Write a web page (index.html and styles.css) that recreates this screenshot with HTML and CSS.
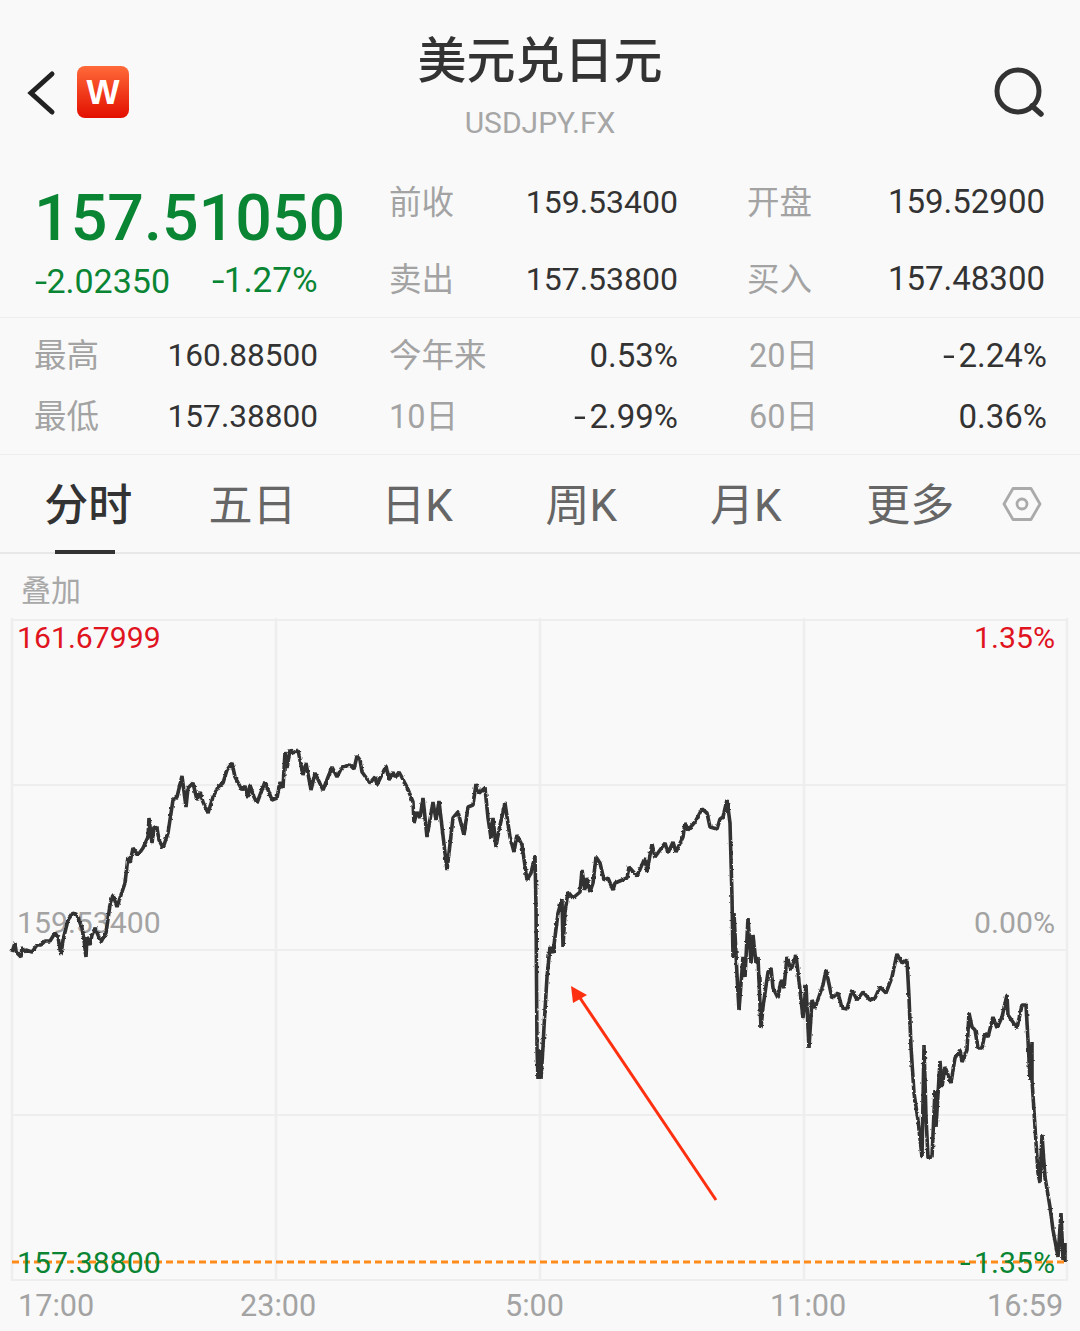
FILE: index.html
```html
<!DOCTYPE html>
<html lang="zh-CN">
<head>
    <meta charset="UTF-8">
    <meta name="viewport" content="width=device-width, initial-scale=1.0">
    <title>美元兑日元</title>
    <link rel="stylesheet" href="styles.css">
</head>
<body>
    <header class="top-bar">
        <div class="top-left">
            <svg class="back-icon" width="30" height="46" viewBox="0 0 30 46">
                <path d="M26 4 L5 23 L26 42" fill="none" stroke="#222" stroke-width="5" stroke-linecap="round" stroke-linejoin="miter"/>
            </svg>
            <div class="logo">W</div>
        </div>
        <div class="title-block">
            <h1>美元兑日元</h1>
            <div class="symbol">USDJPY.FX</div>
        </div>
        <div class="top-right">
            <svg width="52" height="52" viewBox="0 0 52 52">
                <circle cx="24" cy="24" r="21" fill="none" stroke="#333" stroke-width="5"/>
                <path d="M38 39 L47 47" fill="none" stroke="#333" stroke-width="5.5" stroke-linecap="round"/>
            </svg>
        </div>
    </header>

    <section class="quote">
        <div class="price-block">
            <div class="price">157.51050</div>
            <div class="change">
                <span><span class="minus">-</span>2.02350</span>
                <span class="change-pct"><span class="minus">-</span>1.27%</span>
            </div>
        </div>
        <div class="quote-grid">
            <div class="pair"><span class="label">前收</span><span class="value">159.53400</span></div>
            <div class="pair"><span class="label">开盘</span><span class="value">159.52900</span></div>
            <div class="pair"><span class="label">卖出</span><span class="value">157.53800</span></div>
            <div class="pair"><span class="label">买入</span><span class="value">157.48300</span></div>
        </div>
    </section>

    <section class="stats">
        <div class="pair"><span class="label">最高</span><span class="value">160.88500</span></div>
        <div class="pair"><span class="label">今年来</span><span class="value pct">0.53%</span></div>
        <div class="pair"><span class="label">20日</span><span class="value pct"><span class="minus">-</span>2.24%</span></div>
        <div class="pair"><span class="label">最低</span><span class="value">157.38800</span></div>
        <div class="pair"><span class="label">10日</span><span class="value pct"><span class="minus">-</span>2.99%</span></div>
        <div class="pair"><span class="label">60日</span><span class="value pct">0.36%</span></div>
    </section>

    <nav class="tabs">
        <div class="tab active">分时</div>
        <div class="tab">五日</div>
        <div class="tab">日K</div>
        <div class="tab">周K</div>
        <div class="tab">月K</div>
        <div class="tab">更多</div>
        <svg class="tab-settings" width="40" height="36" viewBox="0 0 40 36">
            <path d="M11 2.5 H29 L38 18 L29 33.5 H11 L2 18 Z" fill="none" stroke="#aaa" stroke-width="2.8" stroke-linejoin="round"/>
            <circle cx="20" cy="18" r="5" fill="none" stroke="#aaa" stroke-width="2.8"/>
        </svg>
    </nav>

    <div class="overlay-row">叠加</div>

    <div class="chart">
        <span class="chart-label left top red">161.67999</span>
        <span class="chart-label right top red">1.35%</span>
        <span class="chart-label left mid gray">159.53400</span>
        <span class="chart-label right mid gray">0.00%</span>
        <svg class="chart-svg" width="1080" height="664" viewBox="0 618 1080 664">
            <defs>
                <filter id="rough" filterUnits="userSpaceOnUse" x="0" y="618" width="1080" height="664">
                    <feTurbulence type="fractalNoise" baseFrequency="0.35" numOctaves="1" seed="4"/>
                    <feDisplacementMap in="SourceGraphic" scale="3" xChannelSelector="R" yChannelSelector="G"/>
                </filter>
            </defs>
            <g fill="none">
                <path stroke="#eeeeee" stroke-width="2.5" d="M12 618 V1281 M276 618 V1281 M540 618 V1281 M804 618 V1281 M1067 618 V1281"/>
                <path stroke="#eeeeee" stroke-width="2" d="M12 620 H1068 M12 785 H1068 M12 950 H1068 M12 1115 H1068 M12 1280 H1068"/>
            </g>
            <path class="price-line" filter="url(#rough)" d="M12 952 L15 943 L16 951 L17 953 L19 955 L21 957 L22 947 L24 952 L26 950 L32 952 L37 945 L41 945 L45 941 L50 941 L55 933 L58 937 L61 955 L63 940 L68 920 L73 913 L77 915 L82 928 L84 940 L86 957 L87 937 L90 945 L92 935 L95 928 L98 935 L101 942 L106 933 L110 905 L113 895 L117 907 L121 895 L125 883 L128 857 L130 863 L133 848 L138 855 L143 848 L148 837 L149 818 L152 843 L154 827 L157 828 L159 840 L163 848 L168 833 L173 800 L177 797 L182 776 L186 807 L188 788 L193 783 L197 800 L200 792 L203 802 L208 813 L213 797 L218 787 L223 783 L227 770 L232 763 L235 777 L242 790 L245 786 L248 798 L250 785 L254 797 L257 803 L260 795 L265 782 L272 800 L277 798 L280 782 L283 788 L285 752 L287 768 L290 750 L293 753 L298 750 L303 775 L306 763 L311 790 L315 773 L323 790 L332 767 L337 777 L342 767 L350 765 L354 769 L357 756 L360 760 L362 772 L370 783 L375 777 L377 785 L386 766 L389 780 L393 772 L395 778 L399 772 L407 787 L413 802 L414 823 L417 812 L420 818 L423 798 L427 837 L433 802 L436 820 L439 801 L442 827 L447 870 L453 818 L458 812 L464 835 L468 807 L473 805 L476 784 L479 793 L485 788 L488 818 L491 838 L493 818 L496 847 L499 830 L505 803 L510 837 L514 852 L517 835 L522 845 L527 880 L531 873 L535 856 L536 907 L537 1047 L538 1079 L540 1050 L541 1079 L543 1047 L544 1027 L547 977 L550 947 L553 953 L558 913 L562 899 L563 947 L565 912 L568 892 L573 898 L580 892 L582 870 L585 890 L587 878 L590 892 L593 883 L596 857 L600 863 L604 880 L608 878 L613 890 L615 883 L627 878 L629 867 L637 876 L645 858 L647 872 L652 844 L655 857 L665 843 L668 853 L673 842 L676 852 L683 837 L685 823 L688 830 L695 822 L702 809 L707 813 L710 827 L717 829 L720 819 L723 817 L727 800 L730 823 L732 897 L733 957 L734 913 L737 975 L739 1010 L743 957 L745 977 L748 918 L751 963 L753 935 L756 963 L758 957 L761 1028 L763 1007 L768 972 L771 968 L773 988 L778 998 L781 980 L784 988 L787 957 L791 970 L796 955 L800 990 L803 1018 L806 985 L809 1048 L812 1000 L815 1008 L823 985 L826 970 L832 998 L838 993 L842 1008 L847 1009 L852 990 L857 1000 L863 992 L870 1000 L875 998 L880 987 L886 993 L892 977 L897 954 L902 963 L907 960 L909 997 L911 1047 L914 1093 L918 1120 L922 1157 L924 1045 L926 1117 L928 1157 L932 1157 L935 1090 L936 1127 L940 1061 L942 1087 L945 1067 L951 1083 L955 1058 L960 1050 L962 1062 L967 1050 L969 1013 L972 1027 L975 1030 L978 1048 L982 1048 L985 1033 L988 1037 L993 1017 L997 1028 L1002 1017 L1007 995 L1008 1015 L1017 1028 L1022 1005 L1026 1005 L1028 1040 L1030 1080 L1032 1042 L1032 1080 L1035 1127 L1038 1173 L1040 1183 L1042 1135 L1045 1177 L1050 1207 L1053 1230 L1058 1257 L1061 1213 L1063 1260 L1065 1243 L1065 1262"/>
            <path d="M716 1200 L576 992" fill="none" stroke="#ff3010" stroke-width="3"/>
            <path d="M571 986 L587 995 L573 1003 Z" fill="#ff3010"/>
            <path d="M12 1262 H1066" fill="none" stroke="#ff8c1a" stroke-width="2.8" stroke-dasharray="7 4"/>
        </svg>
        <span class="chart-label left low green">157.38800</span>
        <span class="chart-label right low green"><span class="minus">-</span>1.35%</span>
    </div>

    <div class="time-axis">
        <span>17:00</span>
        <span>23:00</span>
        <span>5:00</span>
        <span>11:00</span>
        <span>16:59</span>
    </div>
</body>
</html>
```

FILE: styles.css
```css
* {
    box-sizing: border-box;
}
body {
    margin: 0;
    width: 1080px;
    height: 1331px;
    overflow: hidden;
    background: #f9f9f9;
    color: #333;
    font-family: Roboto, "Noto Sans CJK SC", sans-serif;
}
.minus {
    display: inline-block;
    margin-right: 6px;
    transform: scaleX(1.3);
    transform-origin: left center;
}

/* top bar */
.top-bar {
    display: grid;
    grid-template-columns: 1fr auto 1fr;
    height: 164px;
}
.top-left {
    display: flex;
    align-items: flex-start;
    padding: 66px 0 0 26px;
    gap: 21px;
}
.back-icon {
    margin-top: 4px;
}
.logo {
    width: 52px;
    height: 52px;
    border-radius: 8px;
    background: linear-gradient(#ff6a39, #e30f00);
    color: #fff;
    font-family: "Liberation Sans", sans-serif;
    font-weight: bold;
    font-size: 35px;
    line-height: 51px;
    text-align: center;
}
.title-block {
    text-align: center;
    padding-top: 29px;
}
.title-block h1 {
    margin: 0;
    font-size: 49px;
    font-weight: 500;
    line-height: 66px;
    color: #333;
}
.symbol {
    margin-top: 5px;
    font-size: 30px;
    line-height: 46px;
    color: #a6a6a6;
}
.top-right {
    display: flex;
    justify-content: flex-end;
    padding: 67px 34px 0 0;
}

/* quote */
.quote {
    display: flex;
    height: 154px;
    border-bottom: 1px solid #eee;
}
.price-block {
    width: 389px;
    padding: 18px 0 0 34px;
}
.price {
    font-size: 64.5px;
    font-weight: 500;
    line-height: 72px;
    color: #0a8534;
}
.change {
    display: flex;
    gap: 42px;
    padding-left: 1px;
    font-size: 34px;
    line-height: 46px;
    margin-top: 4px;
    color: #0a8534;
}
.change .minus {
    margin-right: 2px;
}
.change-pct {
    font-size: 35px;
}
.quote-grid {
    display: grid;
    grid-template-columns: 289px 298px;
    grid-auto-rows: 77px;
    column-gap: 69px;
}
.quote-grid .pair:nth-child(even) .value {
    font-size: 33px;
}
.quote-grid .value {
    margin-top: -2px;
}
.pair {
    display: flex;
    justify-content: space-between;
    align-items: center;
}
.label {
    margin-top: -6px;
    font-size: 32.5px;
    color: #a3a3a3;
}
.value {
    font-size: 32px;
    color: #333;
}

/* stats */
.stats {
    display: grid;
    grid-template-columns: 284px 289px 298px;
    grid-auto-rows: 61px;
    column-gap: 71px;
    height: 137px;
    padding: 7px 0 0 34px;
    border-bottom: 1px solid #eee;
}
.stats .value {
    font-size: 31.6px;
}
.stats .value.pct {
    font-size: 33px;
}

/* tabs */
.tabs {
    display: flex;
    align-items: center;
    height: 99px;
    padding: 0 0 4px 6px;
    border-bottom: 2px solid #e8e8e8;
}
.tab {
    position: relative;
    width: 164.4px;
    text-align: center;
    font-size: 44px;
    color: #666;
}
.tab.active {
    color: #333;
    font-weight: 500;
}
.tab.active::after {
    content: "";
    position: absolute;
    left: 49px;
    bottom: -20px;
    width: 60px;
    height: 4px;
    background: #333;
}
.tab-settings {
    margin: 4px 0 0 10px;
}

.overlay-row {
    height: 64px;
    padding: 16px 0 0 21px;
    font-size: 30px;
    line-height: 42px;
    color: #a8a8a8;
}

/* chart */
.chart {
    position: relative;
    height: 664px;
}
.chart-svg {
    position: absolute;
    left: 0;
    top: 0;
    z-index: 1;
}
.price-line {
    fill: none;
    stroke: #333;
    stroke-width: 3.6;
    stroke-linejoin: bevel;
}
.chart-label {
    position: absolute;
    font-size: 30.2px;
    line-height: 36px;
}
.chart-label.left {
    left: 17px;
}
.chart-label.right {
    right: 25px;
}
.chart-label.top {
    top: 2px;
}
.chart-label.mid {
    top: 287px;
}
.chart-label.low {
    top: 627px;
    z-index: 2;
}
.red {
    color: #e0141e;
}
.gray {
    color: #a3a3a3;
}
.green {
    color: #0a8534;
}

/* time axis */
.time-axis {
    display: grid;
    grid-template-columns: 222px 265px 265px 217px auto;
    padding-left: 18px;
    margin-top: -2px;
    font-size: 30.6px;
    line-height: 52px;
    color: #a3a3a3;
}
```
